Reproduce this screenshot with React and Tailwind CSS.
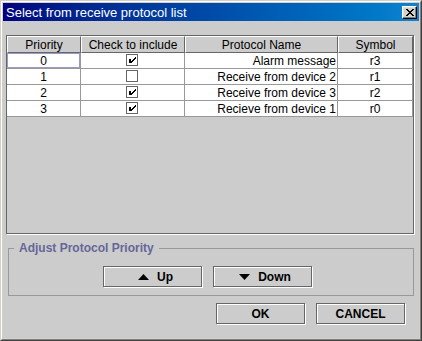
import React from 'react';

const rows = [
  { priority: 0, checked: true, name: 'Alarm message', symbol: 'r3' },
  { priority: 1, checked: false, name: 'Receive from device 2', symbol: 'r1' },
  { priority: 2, checked: true, name: 'Receive from device 3', symbol: 'r2' },
  { priority: 3, checked: true, name: 'Recieve from device 1', symbol: 'r0' },
];

// metal style check box, drawn pixel by pixel
function CheckBox({ checked }) {
  return (
    <svg width="13" height="13" viewBox="0 0 13 13" shapeRendering="crispEdges">
      <rect x="0" y="0" width="12" height="1" fill="#666666" />
      <rect x="0" y="0" width="1" height="12" fill="#666666" />
      <rect x="11" y="0" width="1" height="12" fill="#666666" />
      <rect x="0" y="11" width="12" height="1" fill="#666666" />
      {checked && (
        <g fill="#000">
          <rect x="3" y="5" width="2" height="4" />
          <rect x="9" y="3" width="1" height="2" />
          <rect x="8" y="4" width="1" height="2" />
          <rect x="7" y="5" width="1" height="2" />
          <rect x="6" y="6" width="1" height="2" />
          <rect x="5" y="7" width="1" height="2" />
        </g>
      )}
    </svg>
  );
}

function CloseGlyph() {
  const px = [
    [0, 0], [1, 0], [6, 0], [7, 0],
    [1, 1], [2, 1], [5, 1], [6, 1],
    [2, 2], [3, 2], [4, 2], [5, 2],
    [3, 3], [4, 3],
    [2, 4], [3, 4], [4, 4], [5, 4],
    [1, 5], [2, 5], [5, 5], [6, 5],
    [0, 6], [1, 6], [6, 6], [7, 6],
  ];
  return (
    <svg width="8" height="7" viewBox="0 0 8 7" shapeRendering="crispEdges">
      {px.map(([x, y]) => (
        <rect key={`${x}-${y}`} x={x} y={y} width="1" height="1" fill="#000" />
      ))}
    </svg>
  );
}

function Button({ children, className = '' }) {
  return (
    <button
      type="button"
      className={`h-[21px] flex items-center justify-center gap-[8px] border border-[#666666] bg-[#cccccc] shadow-[inset_1px_1px_0_#fff,1px_1px_0_#fff] text-[12px] font-bold leading-none text-black ${className}`}
    >
      {children}
    </button>
  );
}

const headCell =
  'h-[17px] flex items-center justify-center border border-t-white border-l-white border-r-[#666666] border-b-[#666666] text-[12px] leading-none';
const bodyCell = 'h-[16px] flex items-center border-r border-b border-[#999999] bg-white text-[12px] leading-none';

export default function App() {
  return (
    <div className="w-[422px] h-[341px] flex border border-t-[#d4d0c8] border-l-[#d4d0c8] border-r-[#404040] border-b-[#404040] bg-[#d4d0c8] font-['Liberation_Sans',Arial,sans-serif] text-black">
      <div className="flex-1 flex flex-col border border-t-white border-l-white border-r-[#808080] border-b-[#808080] p-[1px]">
        {/* Title bar */}
        <div className="h-[18px] flex items-center justify-between pl-[3px] pr-[2px] bg-linear-to-r from-[#000080] to-[#1084d0]">
          <span className="text-[13px] leading-none text-white">Select from receive protocol list</span>
          <div className="w-[15px] h-[13px] flex items-center justify-center border border-t-white border-l-white border-r-black border-b-black bg-[#d4d0c8] shadow-[inset_-1px_-1px_0_#808080,inset_1px_1px_0_#dfdfdf]">
            <CloseGlyph />
          </div>
        </div>

        {/* Content */}
        <div className="flex-1 flex flex-col bg-[#cccccc]">
          {/* Table */}
          <div className="ml-[3px] mt-[14px] w-[408px] h-[199px] border border-[#666666] shadow-[1px_1px_0_#fff]">
            <div className="grid grid-cols-[74px_104px_153px_75px]">
              <div className={headCell}>Priority</div>
              <div className={headCell}>Check to include</div>
              <div className={headCell}>Protocol Name</div>
              <div className={headCell}>Symbol</div>
              {rows.map((r, i) => (
                <React.Fragment key={r.symbol}>
                  <div className={`${bodyCell} justify-center ${i === 0 ? 'shadow-[inset_0_0_0_1px_#9999cc]' : ''}`}>
                    {r.priority}
                  </div>
                  <div className={`${bodyCell} justify-center`}>
                    <CheckBox checked={r.checked} />
                  </div>
                  <div className={`${bodyCell} justify-end pr-[1px]`}>{r.name}</div>
                  <div className={`${bodyCell} justify-center`}>{r.symbol}</div>
                </React.Fragment>
              ))}
            </div>
          </div>

          {/* Priority group */}
          <div className="relative ml-[5px] mt-[14px] w-[406px] h-[48px] border border-[#999999] pt-[17px] pb-[8px]">
            <span className="absolute left-[5px] -top-[8px] px-[5px] bg-[#cccccc] text-[12px] leading-[14px] font-bold text-[#666699]">
              Adjust Protocol Priority
            </span>
            <div className="flex pl-[94px] gap-[11px]">
              <Button className="w-[99px] pl-[6px]">
                <svg width="11" height="6" viewBox="0 0 11 6">
                  <polygon points="0,6 5.5,0 11,6" fill="#000" />
                </svg>
                Up
              </Button>
              <Button className="w-[99px] pl-[5px]">
                <svg width="11" height="6" viewBox="0 0 11 6">
                  <polygon points="0,0 11,0 5.5,6" fill="#000" />
                </svg>
                Down
              </Button>
            </div>
          </div>

          {/* Dialog buttons */}
          <div className="flex justify-end gap-[11px] pr-[14px] mt-[7px]">
            <Button className="w-[89px]">OK</Button>
            <Button className="w-[89px]">CANCEL</Button>
          </div>
        </div>
      </div>
    </div>
  );
}
